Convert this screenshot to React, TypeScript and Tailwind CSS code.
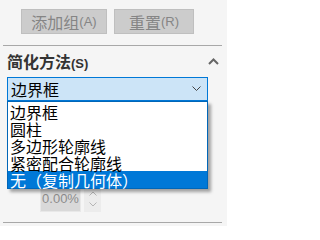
import React from 'react';

const FONT = { fontFamily: '"Noto Sans CJK SC", "Liberation Sans", sans-serif' };

const items = ['边界框', '圆柱', '多边形轮廓线', '紧密配合轮廓线', '无（复制几何体）'];

function Btn({ label, hot, width }: { label: string; hot: string; width: string }) {
  return (
    <div
      className={`${width} h-[25px] flex items-center justify-center bg-[#cccccc] border border-[#bfbfbf] text-[#858585] text-[16px] leading-none`}
    >
      <span>{label}</span>
      <span className="text-[13px]" style={{ fontFamily: '"Liberation Sans", sans-serif' }}>({hot})</span>
    </div>
  );
}

export default function App() {
  const selected = 4;
  return (
    <div className="relative w-[227px] h-[226px] bg-[#f5f5f5] overflow-hidden text-black" style={FONT}>
      {/* top buttons */}
      <div className="flex gap-[7px] pt-[9px] pl-[21px]">
        <Btn label="添加组" hot="A" width="w-[86px]" />
        <Btn label="重置" hot="R" width="w-[80px]" />
      </div>

      <div className="mt-[11px] ml-[3px] w-[219px] h-px bg-[#a8a8a8]" />

      {/* section header */}
      <div className="mt-[4px] h-[22px] pl-[7px] pr-[8px] flex items-center justify-between">
        <div className="flex items-baseline font-bold text-[16px] leading-none text-[#333]">
          <span>简化方法</span>
          <span className="text-[13px]" style={{ fontFamily: '"Liberation Sans", sans-serif' }}>(S)</span>
        </div>
        <svg width="11" height="7" viewBox="0 0 11 7">
          <path d="M1 6 L5.5 1.5 L10 6" fill="none" stroke="#666" strokeWidth="2" />
        </svg>
      </div>

      {/* combobox */}
      <div className="relative mt-[5px] ml-[7px] w-[201px]">
        <div className="h-[24px] border border-[#0078d7] bg-[#cce4f7] flex items-center justify-between pl-[3px] pr-[6px] text-[16px] leading-none">
          <span>边界框</span>
          <svg width="9" height="6" viewBox="0 0 9 6">
            <path d="M0.5 0.5 L4.5 4.5 L8.5 0.5" fill="none" stroke="#444" strokeWidth="1" />
          </svg>
        </div>
        <div className="absolute left-0 top-[24px] w-[201px] z-10 bg-white border border-[#0066b8] shadow-[3px_3px_3px_rgba(0,0,0,0.35)] pt-[1px]">
          {items.map((it, i) => (
            <div
              key={it}
              className={`h-[17px] flex items-center pl-[2px] text-[16px] leading-none whitespace-nowrap ${
                i === selected ? 'bg-[#0078d7] text-white' : 'text-black'
              }`}
            >
              {it}
            </div>
          ))}
        </div>
      </div>

      {/* spinbox (partly hidden behind list) */}
      <div className="mt-[85px] ml-[40px] flex gap-[3px]">
        <div className="w-[41px] h-[26px] bg-[#d9d9d9] border border-[#e8e8e8] flex items-center justify-center text-[#8c8c8c] text-[13px]" style={{ fontFamily: '"Liberation Sans", sans-serif' }}>
          0.00%
        </div>
        <div className="w-[17px] h-[26px] bg-[#ececec] flex flex-col items-center justify-around py-[2px]">
          <svg width="8" height="5" viewBox="0 0 8 5">
            <path d="M0.5 4.5 L4 1 L7.5 4.5" fill="none" stroke="#b5b5b5" strokeWidth="1" />
          </svg>
          <svg width="8" height="5" viewBox="0 0 8 5">
            <path d="M0.5 0.5 L4 4 L7.5 0.5" fill="none" stroke="#b5b5b5" strokeWidth="1" />
          </svg>
        </div>
      </div>

      <div className="mt-[10px] ml-[3px] w-[219px] h-px bg-[#a8a8a8]" />
    </div>
  );
}
